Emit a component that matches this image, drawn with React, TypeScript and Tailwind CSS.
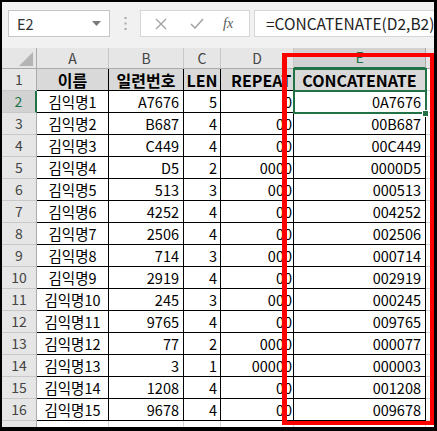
import React from 'react';

const font = { fontFamily: '"Noto Sans CJK KR", "Noto Sans", sans-serif' };

type Row = [string, string, string, string, string];

const rows: Row[] = [
  ['김익명1', 'A7676', '5', '0', '0A7676'],
  ['김익명2', 'B687', '4', '00', '00B687'],
  ['김익명3', 'C449', '4', '00', '00C449'],
  ['김익명4', 'D5', '2', '0000', '0000D5'],
  ['김익명5', '513', '3', '000', '000513'],
  ['김익명6', '4252', '4', '00', '004252'],
  ['김익명7', '2506', '4', '00', '002506'],
  ['김익명8', '714', '3', '000', '000714'],
  ['김익명9', '2919', '4', '00', '002919'],
  ['김익명10', '245', '3', '000', '000245'],
  ['김익명11', '9765', '4', '00', '009765'],
  ['김익명12', '77', '2', '0000', '000077'],
  ['김익명13', '3', '1', '00000', '000003'],
  ['김익명14', '1208', '4', '00', '001208'],
  ['김익명15', '9678', '4', '00', '009678'],
];

const colLetters = ['A', 'B', 'C', 'D', 'E'];
const headers = ['이름', '일련번호', 'LEN', 'REPEAT', 'CONCATENATE'];
const headerAlign = ['justify-center', 'justify-center', 'justify-center', 'justify-start pl-[10px]', 'justify-center'];

function Toolbar() {
  return (
    <div className="h-[46px] shrink-0 bg-[#f1f1f1] flex items-start pt-[8px] pl-[6px]">
      <div className="w-[102px] h-[27px] bg-white border border-[#c6c6c6] flex items-center justify-between pl-[8px] pr-[8px]">
        <span className="text-[14.5px] text-[#333]">E2</span>
        <svg width="9" height="5" viewBox="0 0 9 5">
          <path d="M0 0h9L4.5 5z" fill="#7a7a7a" />
        </svg>
      </div>
      <div className="w-[30px] h-[27px] flex items-center justify-center">
        <svg width="3" height="13" viewBox="0 0 3 13">
          <rect x="0.5" y="0" width="2" height="2" fill="#a8a8a8" />
          <rect x="0.5" y="5.5" width="2" height="2" fill="#a8a8a8" />
          <rect x="0.5" y="11" width="2" height="2" fill="#a8a8a8" />
        </svg>
      </div>
      <div className="w-[110px] h-[27px] bg-white border border-[#d6d6d6] flex items-center pl-[14px]">
        <svg width="12" height="12" viewBox="0 0 12 12">
          <path d="M1 1l10 10M11 1L1 11" stroke="#a3a3a3" strokeWidth="1.4" />
        </svg>
        <svg className="ml-[23px]" width="14" height="11" viewBox="0 0 14 11">
          <path d="M1 6l4 4L13 1" stroke="#a3a3a3" strokeWidth="1.5" fill="none" />
        </svg>
        <span
          className="ml-[19px] text-[14px] italic text-[#5a5a5a]"
          style={{ fontFamily: '"Liberation Serif", serif' }}
        >
          fx
        </span>
      </div>
      <div className="ml-[4px] flex-1 h-[27px] bg-white border border-[#d6d6d6] border-r-0 flex items-center pl-[11px] overflow-hidden">
        <span className="text-[15.5px] text-[#222] whitespace-nowrap">=CONCATENATE(D2,B2)</span>
      </div>
    </div>
  );
}

function Sheet() {
  const align = ['justify-center', 'justify-end pr-[4px]', 'justify-end pr-[3px]', 'justify-end pr-[1px]', 'justify-end pr-[4px]'];
  return (
    <div className="relative flex-1 overflow-hidden">
      <div className="grid grid-cols-[35px_72px_75px_37px_73px_132px_8px] grid-rows-[21px_repeat(16,22px)_20px]">
        {/* column header row */}
        <div className="bg-[#e6e6e6] border-r border-b border-[#ababab] flex items-end justify-end pr-[3px] pb-[2px]">
          <svg width="14" height="14" viewBox="0 0 14 14">
            <path d="M14 0V14H0z" fill="#b4b4b4" />
          </svg>
        </div>
        {colLetters.map((l) => (
          <div
            key={l}
            className={
              l === 'E'
                ? 'bg-[#d2d2d2] border-r border-r-[#ababab] border-b-2 border-b-[#217346] flex items-center justify-center text-[14px] text-[#217346]'
                : 'bg-[#e6e6e6] border-r border-r-[#c8c8c8] border-b border-b-[#ababab] flex items-center justify-center text-[14px] text-[#444]'
            }
          >
            {l}
          </div>
        ))}
        <div className="bg-[#e6e6e6] border-b border-[#ababab]" />

        {/* row 1 */}
        <div className="bg-[#e6e6e6] border-r border-r-[#ababab] border-b border-b-[#c8c8c8] flex items-center justify-center text-[14px] text-[#444]">
          1
        </div>
        {headers.map((h, j) => (
          <div
            key={h}
            className={`bg-[#d9d9d9] border-r border-b border-black flex items-center overflow-hidden whitespace-nowrap text-[16px] font-bold text-black ${headerAlign[j]}`}
          >
            {h}
          </div>
        ))}
        <div className="border-b border-[#d4d4d4]" />

        {rows.map((r, i) => {
          const n = i + 2;
          const sel = n === 2;
          return (
            <React.Fragment key={n}>
              <div
                className={
                  sel
                    ? 'bg-[#d2d2d2] border-r-2 border-r-[#217346] border-b border-b-[#c8c8c8] flex items-center justify-center text-[14px] text-[#217346]'
                    : 'bg-[#e6e6e6] border-r border-r-[#ababab] border-b border-b-[#c8c8c8] flex items-center justify-center text-[14px] text-[#444]'
                }
              >
                {n}
              </div>
              {r.map((v, j) => (
                <div
                  key={j}
                  className={`bg-white border-r border-b border-black flex items-center overflow-hidden whitespace-nowrap text-[14.5px] text-black ${align[j]}`}
                >
                  {v}
                </div>
              ))}
              <div className="border-b border-[#d4d4d4]" />
            </React.Fragment>
          );
        })}

        {/* partial row 17 */}
        <div className="bg-[#e6e6e6] border-r border-[#ababab]" />
        <div className="border-r border-[#d4d4d4]" />
        <div className="border-r border-[#d4d4d4]" />
        <div className="border-r border-[#d4d4d4]" />
        <div className="border-r border-[#d4d4d4]" />
        <div className="border-r border-[#d4d4d4]" />
        <div />
      </div>

      {/* selection */}
      <div className="absolute left-[291px] top-[20px] w-[134px] h-[46px] border-2 border-[#217346]" />
      <div className="absolute left-[291px] top-[42px] w-[134px] h-[2px] bg-[#217346]" />
      <div className="absolute left-[420px] top-[62px] w-[7px] h-[7px] bg-[#217346] border border-white" />
    </div>
  );
}

export default function App() {
  return (
    <div className="relative w-[437px] h-[431px] bg-black pl-[2px] pt-[2px] pr-[3px] pb-[4px] overflow-hidden" style={font}>
      <div className="w-full h-full bg-white flex flex-col overflow-hidden">
        <Toolbar />
        <Sheet />
      </div>
      <div className="absolute left-[282px] top-[53px] w-[152px] h-[372px] border-4 border-l-[5px] border-[#ff0000]" />
    </div>
  );
}
